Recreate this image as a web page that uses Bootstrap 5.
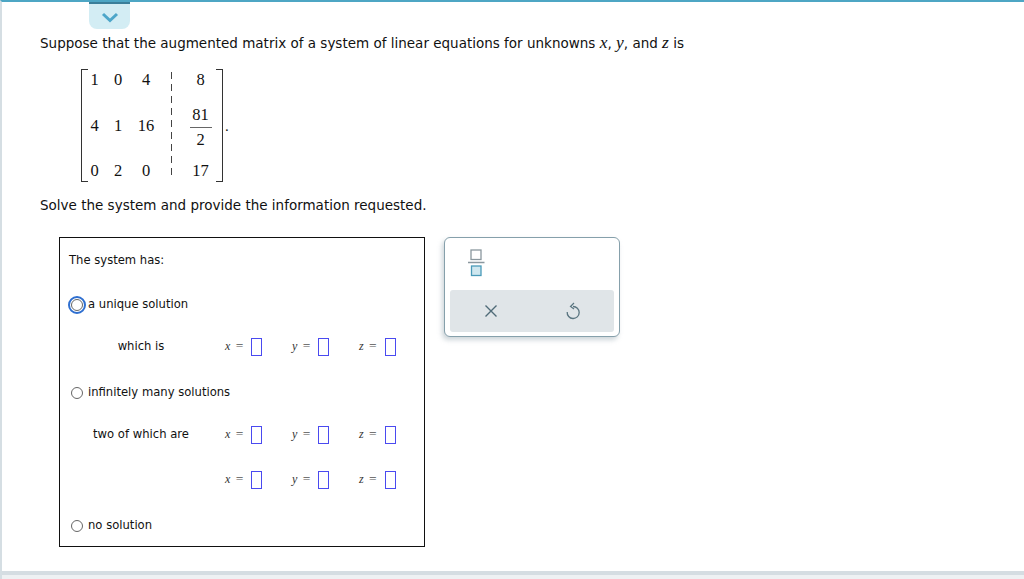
<!DOCTYPE html>
<html lang="en">
  <head>
    <meta charset="UTF-8" />
    <meta name="viewport" content="width=device-width, initial-scale=1.0" />
    <title>Augmented matrix</title>
    <link
      rel="stylesheet"
      href="https://cdn.jsdelivr.net/npm/bootstrap@5.3.3/dist/css/bootstrap.min.css"
    />
    <style>
      html, body { height: 100%; }
      body {
        font-family: "DejaVu Sans", Verdana, sans-serif;
        font-size: 13.5px;
        color: #111;
        background: #fff;
        overflow: hidden;
      }
      .page-frame {
        position: relative;
        height: 579px;
        border-top: 2px solid #4da6c4;
        border-left: 2px solid #d5dee3;
        display: flex;
        flex-direction: column;
      }
      .drop-tab {
        position: absolute;
        left: 87px;
        top: 0;
        width: 41px;
        height: 27px;
        background: #d3edf4;
        border-top: 2px solid #3b7f9a;
        border-radius: 0 0 8px 8px;
      }
      .q-body { flex: 1; padding: 31px 0 0 38px; }
      .q-line { height: 18px; line-height: 18px; margin: 0; white-space: nowrap; }
      .math { font-family: "Liberation Serif", serif; }
      .math i { font-size: 17.5px; }
      .matrix-wrap { margin: 18px 0 0 41px; height: 113px; }
      .matrix {
        position: relative;
        width: 142px;
        height: 113px;
        padding-top: 1px;
        display: grid;
        grid-template-columns: 25px 22px 34px 16px 43px;
        grid-template-rows: 21px 70px 20px;
        font-size: 16.5px;
        align-items: center;
        text-align: center;
        border-left: 1.5px solid #333;
        border-right: 1.5px solid #333;
      }
      .matrix::before, .matrix::after {
        content: "";
        position: absolute;
        top: 0;
        bottom: 0;
        width: 6px;
        border-top: 1.5px solid #333;
        border-bottom: 1.5px solid #333;
      }
      .matrix::before { left: 0; }
      .matrix::after { right: 0; }
      .m-div {
        grid-column: 4;
        grid-row: 1 / 4;
        align-self: stretch;
        justify-self: center;
        width: 1px;
        margin: 2px 0;
        background: repeating-linear-gradient(#444 0 7px, transparent 7px 12px);
      }
      .frac { display: inline-flex; flex-direction: column; align-items: center; line-height: 20px; }
      .frac-top { border-bottom: 1px solid #666; padding: 0 0 2px; width: 22px; }
      .frac-bot { padding-top: 2px; }
      .dot { position: absolute; left: 143px; top: 50px; font-size: 15px; line-height: 15px; }
      .solve-line { margin-top: 14px; }
      .work-row { display: flex; align-items: flex-start; margin: 23px 0 0 19px; gap: 19px; }
      .answer-box {
        width: 366px;
        height: 310px;
        border: 1px solid #111;
        padding: 0 0 0 9px;
        font-size: 11.6px;
      }
      .a-row { display: flex; align-items: center; white-space: nowrap; }
      .a-label { width: 144px; margin-right: 12px; text-align: center; flex: none; }
      .triple { display: flex; width: 67px; flex: none; align-items: center; }
      .triple .math { width: 26px; font-size: 13.5px; word-spacing: 2px; white-space: nowrap; color: #555; }
      .triple .math i { font-size: 12px; color: #333; }
      .blank { width: 11px; height: 18px; border: 1.5px solid #4a4af0; }
      .opt-radio.form-check-input {
        width: 12px;
        height: 12px;
        margin: 0 5px 0 2px;
        flex: none;
        border: 1px solid #666;
        background: #fff;
      }
      .opt-radio.is-focus { outline: 2px solid #2f6fd0; outline-offset: 1px; }
      .tool-panel {
        width: 176px;
        height: 100px;
        border: 1px solid #86a0ab;
        border-radius: 6px;
        box-shadow: -2px 3px 5px rgba(130, 150, 160, .4);
        padding: 6px 5px 5px;
        background: #fff;
      }
      .tool-frac { height: 46px; padding: 1px 0 0 18px; }
      .tool-bar {
        height: 42px;
        background: #e0e5e8;
        border-radius: 3px;
        display: flex;
        align-items: center;
      }
      .tool-bar span { width: 82px; display: flex; justify-content: center; }
      .bottom-band { height: 8px; background: #eef1f3; border-top: 4px solid #d5dde2; flex: none; }
    </style>
  </head>
  <body>
    <div class="page-frame">
      <div class="drop-tab d-flex justify-content-center">
        <svg width="18" height="11" viewBox="0 0 18 11" class="mt-2">
          <path d="M2 2 L9 8.5 L16 2" fill="none" stroke="#4da6c9" stroke-width="3" />
        </svg>
      </div>

      <div class="q-body">
        <p class="q-line">
          Suppose that the augmented matrix of a system of linear equations for unknowns
          <span class="math"><i>x</i></span>, <span class="math"><i>y</i></span>, and
          <span class="math"><i>z</i></span> is
        </p>

        <div class="matrix-wrap">
          <div class="matrix math">
            <div class="m-div"></div>
            <span>1</span><span>0</span><span>4</span><span>8</span>
            <span>4</span><span>1</span><span>16</span>
            <span><span class="frac"><span class="frac-top">81</span><span class="frac-bot">2</span></span></span>
            <span>0</span><span>2</span><span>0</span><span>17</span>
            <span class="dot">.</span>
          </div>
        </div>

        <p class="q-line solve-line">Solve the system and provide the information requested.</p>

        <div class="work-row">
          <div class="answer-box">
            <div class="a-row" style="height: 45px">The system has:</div>
            <div class="a-row" style="height: 43px">
              <input class="form-check-input opt-radio is-focus" type="radio" name="sys" />a unique solution
            </div>
            <div class="a-row" id="row-unique" style="height: 41px"></div>
            <div class="a-row" style="height: 51px">
              <input class="form-check-input opt-radio" type="radio" name="sys" />infinitely many solutions
            </div>
            <div class="a-row" id="row-two" style="height: 33px"></div>
            <div class="a-row" id="row-two-b" style="height: 57px"></div>
            <div class="a-row" style="height: 36px">
              <input class="form-check-input opt-radio" type="radio" name="sys" />no solution
            </div>
          </div>

          <div class="tool-panel">
            <div class="tool-frac">
              <svg width="18" height="30" viewBox="0 0 18 30" class="mt-1">
                <rect x="3" y="1" width="10" height="9.5" fill="#fff" stroke="#8a979e" stroke-width="1.3" />
                <path d="M0 13.5 H16.5" stroke="#8a979e" stroke-width="1.5" />
                <rect x="3.5" y="17" width="9.5" height="9.5" fill="#cfe7ef" stroke="#4a9ab8" stroke-width="1.3" />
              </svg>
            </div>
            <div class="tool-bar">
              <span>
                <svg width="14" height="14" viewBox="0 0 14 14">
                  <path d="M1.5 1.5 L12.5 12.5 M12.5 1.5 L1.5 12.5" stroke="#4f6b78" stroke-width="1.4" fill="none" />
                </svg>
              </span>
              <span>
                <svg width="15" height="18" viewBox="0 0 15 18">
                  <path d="M7 4.5 A6 6 0 1 1 1.2 10" stroke="#5a7580" stroke-width="1.3" fill="none" />
                  <path d="M8 1 L4.5 4.5 L8 7" stroke="#5a7580" stroke-width="1.2" fill="none" />
                </svg>
              </span>
            </div>
          </div>
        </div>
      </div>

      <div class="bottom-band"></div>
    </div>

    <script src="https://cdn.jsdelivr.net/npm/bootstrap@5.3.3/dist/js/bootstrap.bundle.min.js"></script>
    <script>
      // same x / y / z blanks on all three rows
      function triples() {
        let out = "";
        for (let v of ["x", "y", "z"]) {
          out += `<div class="triple"><span class="math"><i>${v}</i> = </span><div class="blank"></div></div>`;
        }
        return out;
      }
      let rows = [
        ["row-unique", "which is"],
        ["row-two", "two of which are"],
        ["row-two-b", ""],
      ];
      for (let r of rows) {
        document.getElementById(r[0]).innerHTML =
          `<div class="a-label">${r[1]}</div>` + triples();
      }
    </script>
  </body>
</html>
